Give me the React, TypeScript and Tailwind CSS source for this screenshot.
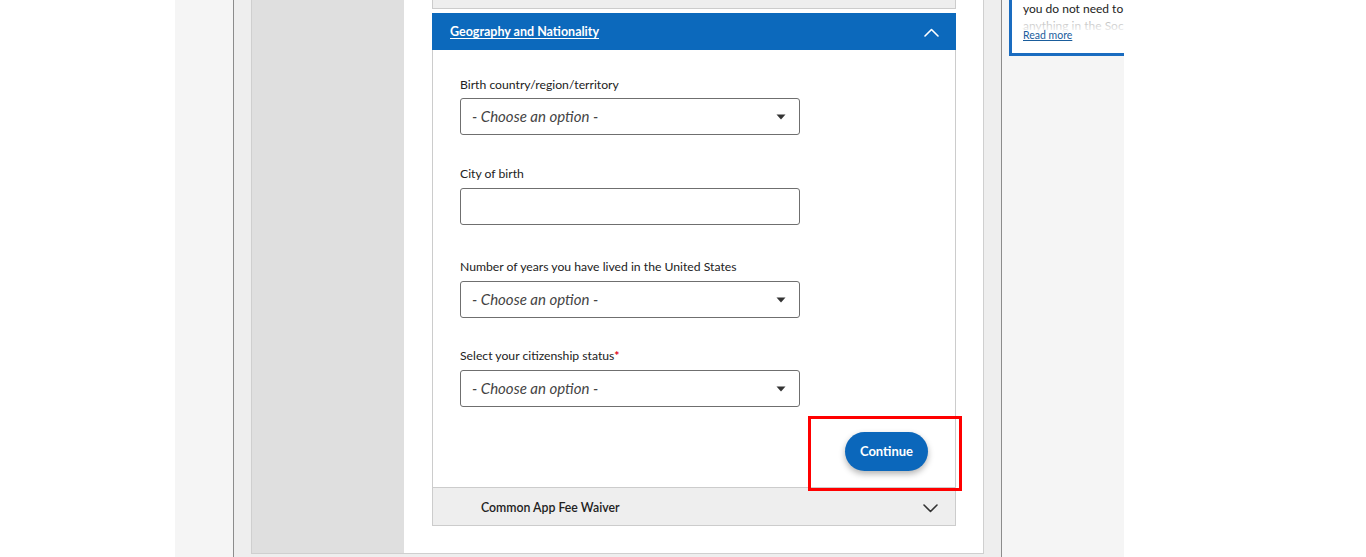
import React from 'react';

const Caret = () => (
    <svg width="10" height="6" viewBox="0 0 10 6" className="text-[#333]">
        <path d="M0.5 0.5 L9.5 0.5 L5 5.5 Z" fill="currentColor" />
    </svg>
);

const Chevron: React.FC<{ up?: boolean; className?: string }> = ({ up, className }) => (
    <svg width="15" height="9" viewBox="0 0 15 9" fill="none" className={className}>
        <polyline
            points={up ? '1,8 7.5,1.5 14,8' : '1,1 7.5,7.5 14,1'}
            stroke="currentColor"
            strokeWidth="1.6"
            strokeLinecap="round"
            strokeLinejoin="round"
        />
    </svg>
);

const SelectBox: React.FC = () => (
    <div className="flex h-[37px] w-[340px] items-center justify-between rounded-[3px] border border-[#6f6f6f] bg-white pl-[11px] pr-[13px]">
        <span className="text-[15px] italic text-[#444]">- Choose an option -</span>
        <Caret />
    </div>
);

const Label: React.FC<{ children: React.ReactNode; required?: boolean }> = ({ children, required }) => (
    <div className="h-[18px] text-[12.2px] leading-[18px] text-[#222]">
        {children}
        {required && <span className="font-bold leading-none text-[#e0001b]">*</span>}
    </div>
);

const App: React.FC = () => {
    return (
        <div className="flex h-[557px] w-[1366px] overflow-hidden bg-white font-['Lato',sans-serif]">
            <div className="w-[175px] shrink-0" />

            <div className="flex w-[949px] shrink-0 bg-[#f5f5f5]">
                <div className="w-[58px] shrink-0" />

                {/* main column */}
                <div className="flex h-full w-[769px] shrink-0 border-x border-[#8c8c8c] bg-[#eeeeee] px-[17px]">
                    <div className="flex h-[554px] w-[733px] border-x border-b border-[#cfcfcf] bg-white">
                        <div className="w-[152px] shrink-0 bg-[#dfdfdf]" />

                        <div className="relative flex-1 pl-[28px] pr-[26px]">
                            <div className="flex w-[524px] flex-col">
                                <div className="h-[9px] border-x border-b border-[#cccccc] bg-[#eeeeee]" />

                                <div className="mt-[4px] flex h-[37px] items-center justify-between bg-[#0c69bc] pl-[18px] pr-[17px] pt-[2px]">
                                    <span className="text-[12.5px] font-bold text-white underline underline-offset-2">
                                        Geography and Nationality
                                    </span>
                                    <Chevron up className="text-white" />
                                </div>

                                <div className="flex h-[437px] flex-col border-x border-[#cccccc] pl-[27px] pr-[27px] pt-[26px]">
                                    <Label>Birth country/region/territory</Label>
                                    <div className="mt-[4px]">
                                        <SelectBox />
                                    </div>

                                    <div className="mt-[30px]">
                                        <Label>City of birth</Label>
                                    </div>
                                    <div className="mt-[5px] h-[37px] w-[340px] rounded-[3px] border border-[#6f6f6f] bg-white" />

                                    <div className="mt-[33px]">
                                        <Label>Number of years you have lived in the United States</Label>
                                    </div>
                                    <div className="mt-[5px]">
                                        <SelectBox />
                                    </div>

                                    <div className="mt-[29px]">
                                        <Label required>Select your citizenship status</Label>
                                    </div>
                                    <div className="mt-[5px]">
                                        <SelectBox />
                                    </div>

                                    <div className="mt-[25px] flex justify-end">
                                        <button className="h-[39px] w-[83px] rounded-full bg-[#0b67bb] text-[13px] font-bold text-white shadow-[0_3px_6px_rgba(0,0,0,0.3)]">
                                            Continue
                                        </button>
                                    </div>
                                </div>

                                <div className="flex h-[39px] items-center justify-between border border-[#cccccc] bg-[#eeeeee] pl-[48px] pr-[17px] pt-[3px]">
                                    <span className="text-[12.3px] font-semibold text-[#222]">Common App Fee Waiver</span>
                                    <Chevron className="text-[#333]" />
                                </div>
                            </div>

                            {/* highlight box */}
                            <div className="absolute left-[404px] top-[416px] h-[75px] w-[154px] border-[3px] border-[#ff0000]" />
                        </div>
                    </div>
                </div>

                {/* sidebar */}
                <div className="flex-1 overflow-hidden pl-[7px]">
                    <div className="relative h-[56px] w-[220px] border-b-[3px] border-l-[3px] border-[#1a6cc0] bg-white pl-[11px]">
                        <div className="text-[12px] leading-[17px] text-[#222]">you do not need to</div>
                        <div className="relative text-[12px] leading-[17px] text-[#222]">
                            anything in the Social Security
                            <div className="absolute inset-0 bg-gradient-to-b from-white/60 to-white" />
                        </div>
                        <div className="relative -mt-[5px] text-[10.5px] leading-[12px] text-[#1a5d9c] underline">Read more</div>
                    </div>
                </div>
            </div>
        </div>
    );
};

export default App;
